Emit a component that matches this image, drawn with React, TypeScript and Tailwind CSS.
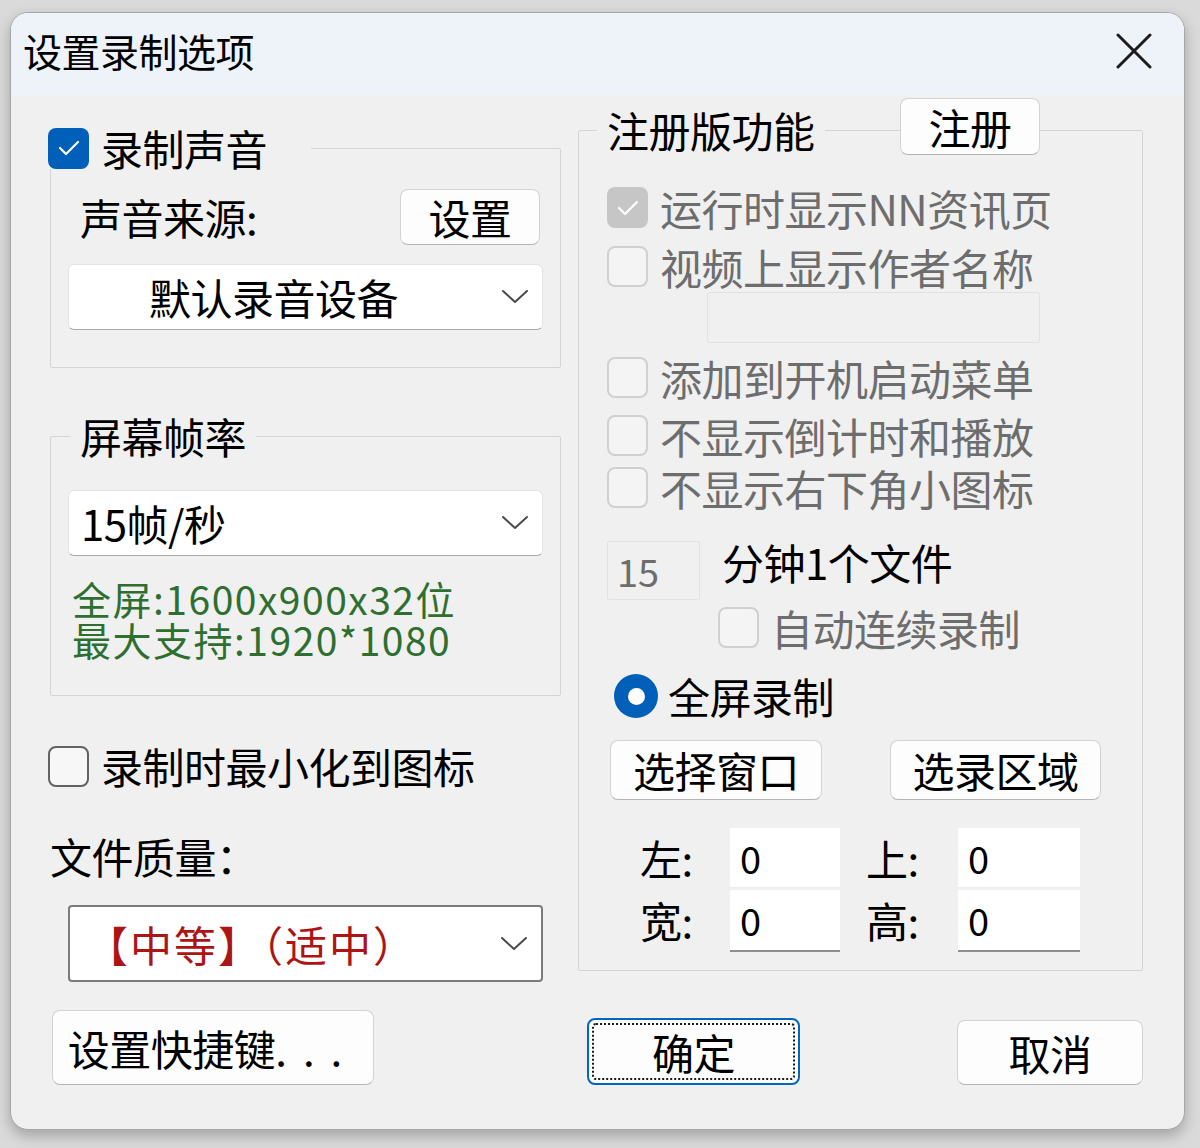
import React from "react";

const FONT = "font-['Noto_Sans_CJK_SC','Noto_Sans',sans-serif]";
const TXT = "text-[42px] leading-[42px] tracking-[-0.5px] whitespace-nowrap";

function Check({ checked, disabled }: { checked?: boolean; disabled?: boolean }) {
  if (checked) {
    return (
      <div
        className={`w-[41px] h-[41px] shrink-0 rounded-[8px] flex items-center justify-center ${
          disabled ? "bg-[#c6c6c6]" : "bg-[#005fb8]"
        }`}
      >
        <svg width="24" height="18" viewBox="0 0 24 18" fill="none">
          <polyline points="3,9 9,15 21,3" stroke="white" strokeWidth="2.2" strokeLinecap="round" strokeLinejoin="round" />
        </svg>
      </div>
    );
  }
  return (
    <div
      className={`w-[41px] h-[41px] shrink-0 rounded-[8px] border-2 ${
        disabled ? "border-[#d0d0d0] bg-[#f4f4f4]" : "border-[#626262] bg-[#f7f7f7]"
      }`}
    />
  );
}

function CheckRow({
  label,
  checked,
  disabled,
  className = "",
}: {
  label: string;
  checked?: boolean;
  disabled?: boolean;
  className?: string;
}) {
  return (
    <div className={`flex items-center gap-[12px] h-[41px] ${className}`}>
      <Check checked={checked} disabled={disabled} />
      <span className={`${TXT} ${disabled ? "text-[#6d6d6d]" : "text-black"}`}>{label}</span>
    </div>
  );
}

function Btn({ children, className = "" }: { children: React.ReactNode; className?: string }) {
  return (
    <div
      className={`shrink-0 flex items-center justify-center rounded-[8px] bg-[#fdfdfd] border border-[#d3d3d3] border-b-[#b4b4b4] text-black ${TXT} ${className}`}
    >
      {children}
    </div>
  );
}

function Chevron() {
  return (
    <svg width="28" height="16" viewBox="0 0 28 16" fill="none" className="shrink-0">
      <polyline points="2,2 14,13 26,2" stroke="#4a4a4a" strokeWidth="2" strokeLinecap="round" strokeLinejoin="round" />
    </svg>
  );
}

function Select({ children, className = "" }: { children: React.ReactNode; className?: string }) {
  return (
    <div
      className={`w-[475px] flex items-center justify-between pr-[13px] bg-white rounded-[6px] border border-[#e3e3e3] border-b-[#a9a9a9] ${className}`}
    >
      <span className={`${TXT} text-black`}>{children}</span>
      <Chevron />
    </div>
  );
}

function NumBox({ className = "" }: { className?: string }) {
  return (
    <div className={`bg-white pl-[10px] flex items-center ${className}`}>
      <span className="text-[38px] leading-[42px] text-black">0</span>
    </div>
  );
}

export default function App() {
  return (
    <div className={`w-[1200px] h-[1148px] bg-[#dadada] pt-[12px] pl-[10px] ${FONT}`}>
      <div className="w-[1175px] h-[1118px] rounded-[18px] border border-[#a6a6a6] bg-[#f0f0f0] overflow-hidden shadow-[0_6px_14px_rgba(0,0,0,0.25)]">
        {/* title bar */}
        <div className="h-[82px] bg-[#eef2f9] flex items-center justify-between pl-[12px] pr-[32px]">
          <span className="text-[39px] leading-[42px] tracking-[-0.5px] text-black -mt-[8px]">设置录制选项</span>
          <svg width="36" height="36" viewBox="0 0 36 36" className="-mt-[6px]">
            <line x1="2" y1="2" x2="34" y2="34" stroke="#1c1c1c" strokeWidth="3" strokeLinecap="round" />
            <line x1="34" y1="2" x2="2" y2="34" stroke="#1c1c1c" strokeWidth="3" strokeLinecap="round" />
          </svg>
        </div>

        <div className="flex items-start">
          {/* left column */}
          <div className="ml-[39px] mt-[32px] w-[510px] shrink-0 flex flex-col">
            <fieldset className="m-0 p-0 border border-[#d4d4d4] rounded-[2px]">
              <legend className="ml-[-3px] pr-[44px] p-0">
                <div className="flex items-center gap-[12px] h-[42px]">
                  <Check checked />
                  <span className={`${TXT} text-black`}>录制声音</span>
                </div>
              </legend>
              <div className="px-[17px] pb-[37px]">
                <div className="mt-[20px] flex items-center justify-between h-[56px]">
                  <span className={`${TXT} ml-[12px] text-black`}>声音来源:</span>
                  <Btn className="w-[140px] h-[56px] mr-[3px]">设置</Btn>
                </div>
                <Select className="mt-[19px] h-[66px] pl-[80px]">默认录音设备</Select>
              </div>
            </fieldset>

            <fieldset className="mt-[47px] m-0 p-0 border border-[#d4d4d4] rounded-[2px]">
              <legend className="ml-[19px] px-[10px]">
                <span className={`${TXT} block h-[42px] text-black`}>屏幕帧率</span>
              </legend>
              <div className="px-[17px] pb-[35px]">
                <Select className="mt-[33px] h-[66px] pl-[12px]">15帧/秒</Select>
                <div className="mt-[22px] ml-[4px] text-[39px] leading-[41px] tracking-[1.5px] text-[#2e6f30] whitespace-nowrap">
                  <div>全屏:1600x900x32位</div>
                  <div>最大支持:1920*1080</div>
                </div>
              </div>
            </fieldset>

            <CheckRow label="录制时最小化到图标" className="mt-[49px] ml-[-2px] h-[42px]" />

            <div className={`${TXT} mt-[47px] h-[44px] leading-[44px] text-black`}>文件质量：</div>

            <div className="mt-[27px] ml-[18px] w-[475px] h-[77px] flex items-center justify-between pl-[16px] pr-[13px] bg-white rounded-[4px] border-2 border-[#7b7b7b]">
              <span className={`${TXT} tracking-[2px] text-[#ad1414]`}>【中等】（适中）</span>
              <Chevron />
            </div>
          </div>

          {/* right column */}
          <div className="ml-[18px] mt-[14px] w-[565px] shrink-0">
            <fieldset className="relative m-0 p-0 border border-[#d4d4d4] rounded-[2px]">
              <legend className="ml-[18px] px-[10px]">
                <span className={`${TXT} block h-[42px] text-black`}>注册版功能</span>
              </legend>
              <Btn className="absolute left-[321px] top-[-53px] w-[140px] h-[57px]">注册</Btn>
              <div className="pl-[28px] pb-[18px] flex flex-col">
                <CheckRow label="运行时显示NN资讯页" checked disabled className="mt-[36px]" />
                <CheckRow label="视频上显示作者名称" disabled className="mt-[18px]" />
                <div className="mt-[5px] ml-[100px] w-[333px] h-[51px] bg-[#f0f0f0] border border-[#e1e1e1] rounded-[3px]" />
                <CheckRow label="添加到开机启动菜单" disabled className="mt-[14px]" />
                <CheckRow label="不显示倒计时和播放" disabled className="mt-[17px]" />
                <CheckRow label="不显示右下角小图标" disabled className="mt-[11px]" />

                <div className="mt-[33px] flex items-start">
                  <div className="w-[93px] h-[59px] shrink-0 bg-[#f0f0f0] border border-[#e2e2e2] rounded-[2px] pl-[9px] flex items-center">
                    <span className="text-[38px] leading-[42px] text-[#6d6d6d]">15</span>
                  </div>
                  <span className={`${TXT} ml-[22px] text-black`}>分钟1个文件</span>
                </div>

                <CheckRow label="自动连续录制" disabled className="mt-[7px] ml-[111px]" />

                <div className="mt-[26px] ml-[7px] flex items-center gap-[10px] h-[44px]">
                  <div className="w-[44px] h-[44px] rounded-full bg-[#005fb8] flex items-center justify-center shrink-0">
                    <div className="w-[17px] h-[17px] rounded-full bg-white" />
                  </div>
                  <span className={`${TXT} text-black`}>全屏录制</span>
                </div>

                <div className="mt-[22px] ml-[3px] flex">
                  <Btn className="w-[212px] h-[60px]">选择窗口</Btn>
                  <Btn className="ml-[68px] w-[211px] h-[60px]">选录区域</Btn>
                </div>

                <div className="mt-[28px] ml-[33px] flex flex-col gap-[2px]">
                  <div className="flex h-[60px]">
                    <span className={`${TXT} w-[90px] leading-[60px] text-black`}>左:</span>
                    <NumBox className="w-[110px] border-b border-[#ececec]" />
                    <span className={`${TXT} ml-[26px] w-[92px] leading-[60px] text-black`}>上:</span>
                    <NumBox className="w-[122px] border-b border-[#ececec]" />
                  </div>
                  <div className="flex h-[62px]">
                    <span className={`${TXT} w-[90px] leading-[60px] text-black`}>宽:</span>
                    <NumBox className="w-[110px] border-b-2 border-[#8e8e8e]" />
                    <span className={`${TXT} ml-[26px] w-[92px] leading-[60px] text-black`}>高:</span>
                    <NumBox className="w-[122px] border-b-2 border-[#8e8e8e]" />
                  </div>
                </div>
              </div>
            </fieldset>
          </div>
        </div>

        {/* bottom buttons */}
        <div className="mt-[28px] pl-[41px] flex items-end">
          <Btn className="w-[322px] h-[75px]">
            设置快捷键<span className="tracking-[16px]">...</span>
          </Btn>
          <div className="ml-[213px] w-[213px] h-[67px] shrink-0 rounded-[8px] bg-[#fdfdfd] border-2 border-[#0067c0] p-[3px]">
            <div className={`h-full w-full rounded-[4px] border-2 border-dotted border-[#1a1a1a] flex items-center justify-center ${TXT} text-black`}>
              确定
            </div>
          </div>
          <Btn className="ml-[157px] w-[186px] h-[65px]">取消</Btn>
        </div>
      </div>
    </div>
  );
}
